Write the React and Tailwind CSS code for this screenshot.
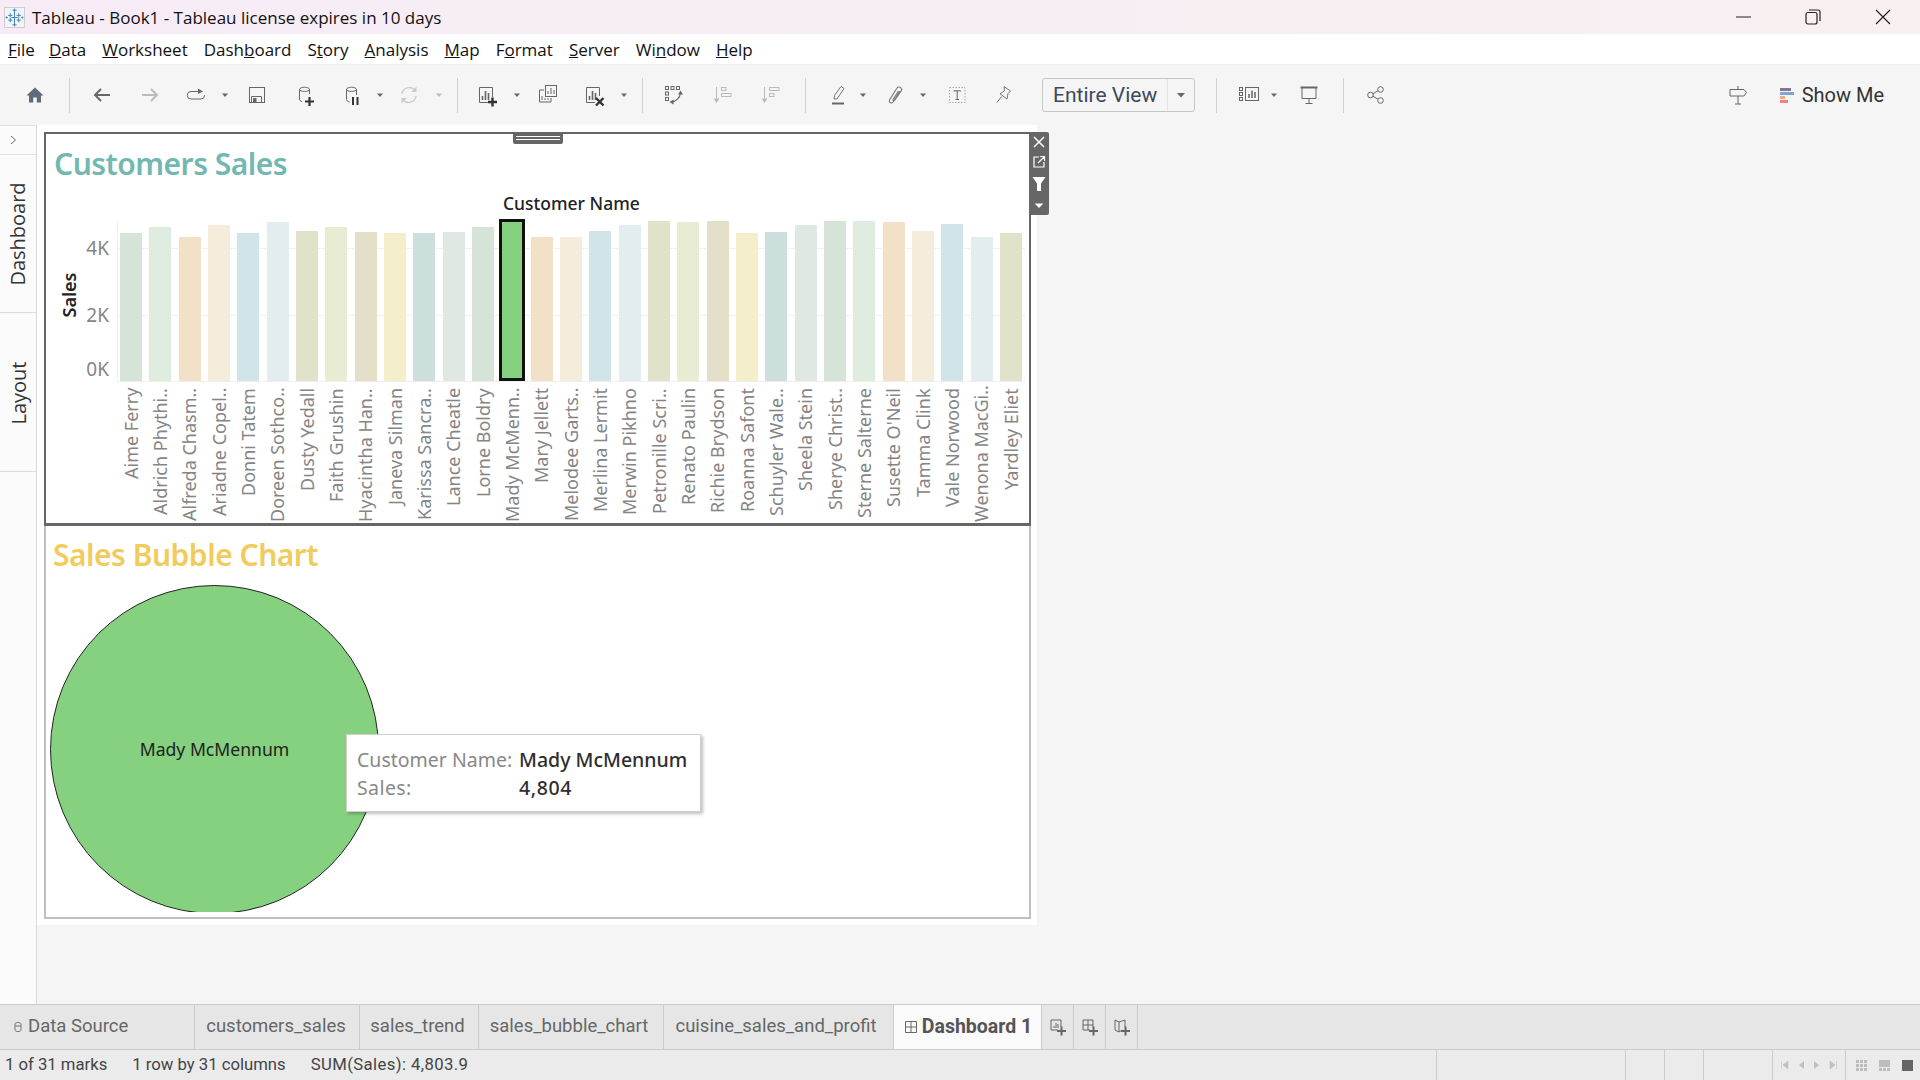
import React from "react";

const Ic = ({ children, className = "" }) => (
  <svg viewBox="0 0 24 24" fill="none" stroke="#666" strokeWidth="1" className={`w-[24px] h-[24px] shrink-0 ${className}`}>{children}</svg>
);
const Caret = ({ className = "", light }) => (
  <svg viewBox="0 0 10 10" className={`w-[10px] h-[10px] shrink-0 ${className}`}><path d="M2 3.5H8L5 7Z" fill={light ? "#bbb" : "#666"} /></svg>
);
const Div = ({ className = "" }) => <div className={`w-px h-[35px] bg-[#cfcfcf] shrink-0 ${className}`} />;

const bars = [
  ["Aime Ferry", 148, "#d5e4d7"], ["Aldrich Phythi..", 154, "#deecdf"], ["Alfreda Chasm..", 144, "#f3e0c9"], ["Ariadne Copel..", 156, "#f5ecdc"],
  ["Donni Tatem", 148, "#d1e4e7"], ["Doreen Sothco..", 159, "#e1edee"], ["Dusty Yedall", 150, "#e0e2ca"], ["Faith Grushin", 154, "#e8ecd3"],
  ["Hyacintha Han..", 149, "#e4dfc8"], ["Janeva Silman", 148, "#f4eeca"], ["Karissa Sancra..", 148, "#cddfdd"], ["Lance Cheatle", 149, "#dfe8e3"],
  ["Lorne Boldry", 154, "#d5e4d7"], ["Mady McMenn..", 162, "#86d17f"], ["Mary Jellett", 144, "#f3e0c9"], ["Melodee Garts..", 144, "#f5ecdc"],
  ["Merlina Lermit", 150, "#d1e4e7"], ["Merwin Pikhno", 156, "#e1edee"], ["Petronille Scri..", 160, "#e0e2ca"], ["Renato Paulin", 159, "#e8ecd3"],
  ["Richie Brydson", 160, "#e4dfc8"], ["Roanna Safont", 148, "#f4eeca"], ["Schuyler Wale..", 149, "#cddfdd"], ["Sheela Stein", 156, "#dfe8e3"],
  ["Sherye Christ..", 160, "#d5e4d7"], ["Sterne Salterne", 160, "#deecdf"], ["Susette O'Neil", 159, "#f3e0c9"], ["Tamma Clink", 150, "#f5ecdc"],
  ["Vale Norwood", 157, "#d1e4e7"], ["Wenona MacGi..", 144, "#e1edee"], ["Yardley Eliet", 148, "#e0e2ca"],
];

const menus = [
  ["", "D", "ata"], ["", "W", "orksheet"], ["Dash", "b", "oard"], ["S", "t", "ory"], ["", "A", "nalysis"],
  ["", "M", "ap"], ["F", "o", "rmat"], ["", "S", "erver"], ["Wi", "n", "dow"], ["", "H", "elp"],
];

function Toolbar() {
  return (
    <div className="h-[61px] bg-[#f5f5f5] flex items-center shrink-0 border-t border-[#efefef] [font-family:'Roboto',sans-serif]">
      <Ic className="ml-[23px]"><path d="M12 4.5L3.5 12.5H6V19.5H10.2V14.5H13.8V19.5H18V12.5H20.5Z" fill="#5f6b7b" stroke="none" /></Ic>
      <Div className="ml-[22px]" />
      <Ic className="ml-[20px]"><path d="M20 12H5M11 6L5 12L11 18" strokeWidth="1.9" /></Ic>
      <Ic className="ml-[24px]"><path d="M4 12H19M13 6L19 12L13 18" stroke="#bbb" strokeWidth="1.9" /></Ic>
      <Ic className="ml-[22px]"><path d="M15 8.5H7a3.5 3.5 0 0 0 0 7.500H17a3.500 3.500 0 0 0 3.500-3.500V12" /><path d="M14 5.500L19 8.500L14 11Z" fill="#666" stroke="none" /></Ic>
      <Caret className="ml-[12px]" />
      <Ic className="ml-[15px]"><rect x="4.500" y="4.500" width="15" height="15" /><path d="M6.500 19.500V13.500H16.500V19.500" /><rect x="8" y="15" width="3.500" height="4" fill="#666" stroke="none" /></Ic>
      <Ic className="ml-[24px]"><path d="M6.500 6.500C6.500 3.500 16.500 3.500 16.500 6.500V11M6.500 6.500C6.500 9 16.500 9 16.500 6.500M6.500 6.500V16.500C6.500 17.500 7.500 18 9 18.500" /><path d="M12 18.500H21M16.500 14V23" stroke="#333" strokeWidth="2.200" /></Ic>
      <Ic className="ml-[23px]"><path d="M6.500 6.500C6.500 3.500 16.500 3.500 16.500 6.500V12M6.500 6.500C6.500 9 16.500 9 16.500 6.500M6.500 6.500V16.500C6.500 17.500 7.500 18.500 9.500 19" /><path d="M13 14V22M17.500 14V22" stroke="#333" strokeWidth="2" /></Ic>
      <Caret className="ml-[11px]" />
      <Ic className="ml-[12px]"><path d="M5 11A7.500 7.500 0 0 1 18 7M19 13A7.500 7.500 0 0 1 6 17" stroke="#ccc" strokeWidth="1.500" /><path d="M19.500 3.500V9H14ZM4.500 20.500V15H10Z" fill="#ccc" stroke="none" /></Ic>
      <Caret className="ml-[13px]" light />
      <Div className="ml-[13px]" />
      <Ic className="ml-[18px]"><path d="M16.500 14V4.500H3.500V19.500H13" /><path d="M6.500 17V13M9.500 17V8M12.500 17V10" strokeWidth="1.600" /><path d="M12 19H21M16.500 14.500V23.500" stroke="#333" strokeWidth="2.400" /></Ic>
      <Caret className="ml-[12px]" />
      <Ic className="ml-[14px]"><path d="M8 7H3.500V19H15V15" /><rect x="9.500" y="2.500" width="11" height="11" fill="#f5f5f5" /><path d="M12 11V8M15 11V5M18 11V7M6 17V13M9 17V15M12 17V15" strokeWidth="1" /></Ic>
      <Ic className="ml-[23px]"><path d="M16.500 13V4.500H3.500V19.500H12" /><path d="M6.500 17V13M9.500 17V8M12.500 17V10" strokeWidth="1.600" /><path d="M13 15L20.500 22.500M20.500 15L13 22.500" stroke="#333" strokeWidth="2.400" /></Ic>
      <Caret className="ml-[12px]" />
      <Div className="ml-[13px]" />
      <Ic className="ml-[19px]"><g fill="none" strokeWidth="1"><rect x="3.500" y="3.500" width="3" height="3" /><rect x="9" y="3.500" width="3" height="3" /><rect x="14.500" y="3.500" width="3" height="3" /><rect x="3.500" y="9" width="3" height="3" /><rect x="3.500" y="14.500" width="3" height="3" /></g><path d="M18.500 10C18 15 14 18.500 9.500 19" strokeWidth="1.200" /><path d="M18.500 7.500L21 11.500H16ZM7.500 19L11.500 16.500V21.500Z" fill="#666" stroke="none" /></Ic>
      <Ic className="ml-[25px]"><g stroke="#bbb"><path d="M5.500 4V18" /><path d="M2.500 15.500H8.500L5.500 20Z" fill="#bbb" stroke="none" /><rect x="10.500" y="4.500" width="4.500" height="3" /><rect x="10.500" y="10.500" width="9.500" height="3" /></g></Ic>
      <Ic className="ml-[24px]"><g stroke="#bbb"><path d="M5.500 4V18" /><path d="M2.500 15.500H8.500L5.500 20Z" fill="#bbb" stroke="none" /><rect x="10.500" y="4.500" width="9.500" height="3" /><rect x="10.500" y="10.500" width="4.500" height="3" /></g></Ic>
      <Div className="ml-[22px]" />
      <Ic className="ml-[20px]"><path d="M15 3.500L18 5.500L11 16H8L8.500 12.500Z" stroke="#777" /><path d="M6 20.500H18" stroke="#666" strokeWidth="2" /></Ic>
      <Caret className="ml-[8px]" />
      <Ic className="ml-[15px]"><path d="M17 8L10 19C8.500 21 5.500 19.500 6.500 17L14 5C15.500 3 19.500 4.500 18.500 7.500L11.500 17.500C11 18 9.500 17.500 10 16.500L15.500 8" stroke="#777" strokeWidth="1.100" /></Ic>
      <Caret className="ml-[11px]" />
      <Ic className="ml-[17px]"><rect x="4.500" y="4.500" width="15.500" height="15" stroke="#aaa" strokeDasharray="1.500 1.500" /><path d="M9 8.500V7.800H15.500V8.500M12.200 8V16.500M10.500 16.500H14" stroke="#666" /></Ic>
      <Ic className="ml-[22px]"><path d="M13 3.500L19.500 8L17 10.500L16 16L9 10.800L13.500 7.800ZM10.500 13.500L6 19.500" stroke="#777" /></Ic>
      <div className="ml-[27px] w-[153px] h-[34px] flex items-stretch border border-[#c6c6c6] rounded-[3px] shrink-0">
        <div className="flex-1 pl-[10px] pt-[1px] flex items-center text-[21px] text-[#3a4a5c] border-r border-[#e3e3e3] whitespace-nowrap">Entire View</div>
        <div className="w-[26px] flex items-center justify-center"><svg viewBox="0 0 10 10" className="w-[10px] h-[10px]"><path d="M1 3H9L5 7.500Z" fill="#666" /></svg></div>
      </div>
      <Div className="ml-[21px]" />
      <Ic className="ml-[20px]"><rect x="8.500" y="4.500" width="13" height="13" /><path d="M12 15V11M15 15V7.500M18 15V9" strokeWidth="1.500" /><rect x="2.500" y="4.500" width="3" height="3" /><rect x="2.500" y="9.500" width="3" height="3" /><rect x="2.500" y="14.500" width="3" height="3" /></Ic>
      <Caret className="ml-[8px]" />
      <Ic className="ml-[18px]"><path d="M3.500 4.500H20.500" strokeWidth="2" /><path d="M5 5V15.500H19V5M12 15.500V20.500M8.500 20.500H15.500" /></Ic>
      <Div className="ml-[22px]" />
      <Ic className="ml-[20px]"><circle cx="6.500" cy="12" r="2.800" /><circle cx="16.500" cy="6.500" r="2.800" /><circle cx="16.500" cy="17.500" r="2.800" /><path d="M9 10.700L14 7.800M9 13.300L14 16.200" /></Ic>
      <Ic className="ml-auto"><path d="M4 6.500H18L20.500 9.500L18 13H4ZM12 3V6.500M12 13V21M9 21H15" /></Ic>
      <div className="ml-[30px] w-[14px] flex flex-col gap-px shrink-0">
        <div className="h-[3px] w-[11px] bg-[#8b7396]" />
        <div className="h-[3px] w-[14px] bg-[#7fa6cf]" />
        <div className="h-[3px] w-[5px] bg-[#f5a97f]" />
        <div className="h-[3px] w-[8px] bg-[#f57c85]" />
      </div>
      <div className="ml-[8px] mr-[36px] -mt-[1px] text-[20px] text-[#333]">Show Me</div>
    </div>
  );
}

function Zone1() {
  return (
    <div className="relative w-[987px] h-[394px] border-2 border-b-[3px] border-[#666] bg-white shrink-0 [font-family:'Noto_Sans',sans-serif]">
      <div className="absolute left-[467px] -top-[2px] w-[50px] h-[12px] bg-[#666] rounded-b-[2px] flex flex-col justify-center gap-[2px] px-[3px]">
        <div className="h-px bg-white" /><div className="h-px bg-white" />
      </div>
      <div className="absolute left-full -top-[2px] w-[20px] h-[83px] bg-[#666] rounded-r-[2px] flex flex-col items-center">
        <svg viewBox="0 0 20 20" className="w-[20px] h-[20px]" fill="none" stroke="#fff" strokeWidth="1.500"><path d="M5 5L15 15M15 5L5 15" /></svg>
        <svg viewBox="0 0 20 20" className="w-[20px] h-[20px]" fill="none" stroke="#fff" strokeWidth="1.200"><path d="M10 5H5V15H15V10M9 11L15 5M11 4.500H15.500V9" /></svg>
        <svg viewBox="0 0 20 20" className="w-[20px] h-[24px]"><path d="M3.500 3H16.500L12 9.500V17H8V9.500Z" fill="#fff" /></svg>
        <svg viewBox="0 0 20 20" className="w-[20px] h-[19px]"><path d="M5.500 8H14.500L10 12.500Z" fill="#fff" /></svg>
      </div>

      <div className="pl-[8px] pt-[12px] h-[44px] text-[30px] leading-[36px] font-semibold text-[#73b8b0] tracking-[-0.5px] whitespace-nowrap">Customers Sales</div>
      <div className="mt-[15px] ml-[457px] h-[20px] text-[17.5px] leading-[20px] font-medium text-[#222] whitespace-nowrap">Customer Name</div>

      <div className="relative mt-[7px] ml-[71px] h-[172px] w-[908px]">
        <div className="absolute left-0 right-0 top-[28px] h-px bg-[#f1f1f1]" />
        <div className="absolute left-0 right-0 top-[95px] h-px bg-[#f1f1f1]" />
        <div className="absolute left-0 top-0 bottom-[11px] w-px bg-[#f1f1f1]" />
        <div className="absolute -left-[36px] top-[17px] w-[28px] text-right text-[19px] leading-[22px] text-[#858585]">4K</div>
        <div className="absolute -left-[36px] top-[84px] w-[28px] text-right text-[19px] leading-[22px] text-[#858585]">2K</div>
        <div className="absolute -left-[36px] top-[138px] w-[28px] text-right text-[19px] leading-[22px] text-[#858585]">0K</div>
        <div className="absolute -left-[73px] top-[63px] w-[50px] h-[24px] -rotate-90 text-[18px] leading-[24px] font-semibold text-[#222] text-center">Sales</div>
        <div className="absolute left-0 right-0 top-[161px] h-px bg-[#efefef]" />
        <div className="absolute left-[3px] bottom-[11px] flex items-end gap-[7.33px]">
          {bars.map((b) => (
            b[0].startsWith("Mady") ? (
              <div key={b[0]} className="w-[26px] -mx-[2px] h-[162px] bg-[#86d17f] border-[3px] border-[#111] shrink-0" />
            ) : (
              <div key={b[0]} className="w-[22px] shrink-0" style={{ height: b[1], backgroundColor: b[2] }} />
            )
          ))}
        </div>
      </div>
      <div className="ml-[70px] flex w-[940px] h-[132px] -mt-[4px]">
        {bars.map((b) => (
          <div key={b[0]} className="w-[29.33px] shrink-0 h-[134px] flex justify-center">
            <div className="[writing-mode:vertical-rl] rotate-180 h-[134px] text-right whitespace-nowrap text-[18px] leading-[22px] text-[#858585]">{b[0]}</div>
          </div>
        ))}
      </div>
    </div>
  );
}

function Zone2() {
  return (
    <div className="relative w-[987px] h-[393px] border-2 border-t-0 border-[#c0c0c0] bg-white shrink-0 [font-family:'Noto_Sans',sans-serif]">
      <div className="pl-[7px] pt-[11px] h-[59px] text-[30px] leading-[36px] font-semibold text-[#f2cb5e] tracking-[-0.5px] whitespace-nowrap">Sales Bubble Chart</div>
      <div className="ml-[4px] h-[327px] w-[340px] overflow-hidden">
        <div className="w-[329px] h-[329px] rounded-full bg-[#86d17f] border border-[#222] flex items-center justify-center text-[17.6px] text-[#222]">Mady McMennum</div>
      </div>
      <div className="absolute left-[300px] top-[208px] w-[355px] h-[78px] bg-white border border-[#cfcfcf] shadow-[2px_2px_3px_rgba(0,0,0,0.25)] pl-[10px] pt-[11px] grid grid-cols-[162px_1fr] content-start text-[19.5px] leading-[28px] whitespace-nowrap">
        <div className="text-[#888]">Customer Name:</div>
        <div className="text-[#2e2e2e] font-medium">Mady McMennum</div>
        <div className="text-[#888] tracking-[0.4px]">Sales:</div>
        <div className="text-[#2e2e2e] font-medium tracking-[0.6px]">4,804</div>
      </div>
    </div>
  );
}

const Tab = ({ className = "", children }) => (
  <div className={`h-full flex items-center justify-center border-r border-[#cbcbcb] text-[18.5px] text-[#666] shrink-0 whitespace-nowrap ${className}`}>{children}</div>
);

export default function App() {
  return (
    <div className="w-[1920px] h-[1080px] overflow-hidden flex flex-col bg-white [font-family:'Open_Sans',sans-serif]">
      <div className="h-[34px] shrink-0 flex items-center bg-linear-to-r from-[#f7ecf6] to-[#f8f0f1] text-[17px] text-[#111]">
        <svg viewBox="0 0 20 20" className="ml-[4px] w-[21px] h-[21px] shrink-0" fill="none" stroke="#3d7fb5" strokeWidth="0.900">
          <rect x="0.500" y="0.500" width="19" height="19" fill="#f2f5f7" stroke="#ccc" />
          <path d="M10 3V17M7 10H13M10 1.500V5M8 3H12M10 15V18.500M8 17H12M6 6V10M4 8H8M14 6V10M12 8H16M6 10.500V14.500M4 12.500H8M14 10.500V14.500M12 12.500H16M2.500 9V11M1.500 10H3.500M17.500 9V11M16.500 10H18.500" />
        </svg>
        <div className="ml-[7px] pt-[1px] whitespace-nowrap">Tableau - Book1 - Tableau license expires in 10 days</div>
        <svg viewBox="0 0 16 16" className="ml-auto w-[16px] h-[16px]" fill="none" stroke="#222"><path d="M0 8H15" /></svg>
        <svg viewBox="0 0 16 16" className="ml-[53px] w-[16px] h-[16px]" fill="none" stroke="#222" strokeWidth="1.200"><rect x="1" y="3.500" width="11" height="11.500" rx="2" /><path d="M4 1H13C14.500 1 15 2 15 3V12" /></svg>
        <svg viewBox="0 0 16 16" className="ml-[54px] mr-[29px] w-[16px] h-[16px]" fill="none" stroke="#222" strokeWidth="1.200"><path d="M1 1L15 15M15 1L1 15" /></svg>
      </div>
      <div className="h-[30px] shrink-0 bg-white flex items-center gap-[16px] pl-[8px] pt-[2px] text-[17px] text-[#111]">
        <div className="whitespace-nowrap -mr-[2px]"><span className="underline">F</span>ile</div>
        {menus.map((m) => (
          <div key={m[0] + m[1] + m[2]} className="whitespace-nowrap">{m[0]}<span className="underline">{m[1]}</span>{m[2]}</div>
        ))}
      </div>
      <Toolbar />
      <div className="flex-1 min-h-0 flex">
        <div className="w-[37px] shrink-0 bg-[#fbfbfb] border-r border-[#d9d9d9] flex flex-col">
          <div className="h-[30px] border-b border-t border-[#e0e0e0] flex items-center pl-[8px] pb-[1px]">
            <svg viewBox="0 0 10 10" className="w-[10px] h-[10px]" fill="none" stroke="#666"><path d="M3 1L7.500 5L3 9" /></svg>
          </div>
          <div className="h-[158px] border-b border-[#dcdcdc] flex items-center justify-center">
            <div className="-rotate-90 text-[20px] text-[#333] whitespace-nowrap">Dashboard</div>
          </div>
          <div className="h-[159px] border-b border-[#dcdcdc] flex items-center justify-center pt-[2px]">
            <div className="-rotate-90 text-[20px] text-[#333] whitespace-nowrap">Layout</div>
          </div>
        </div>
        <div className="flex-1 bg-[#f5f5f5]">
          <div className="w-[1000px] h-[800px] bg-white pl-[7px] pt-[7px] flex flex-col">
            <Zone1 />
            <Zone2 />
          </div>
        </div>
      </div>
      <div className="h-[46px] shrink-0 bg-[#e6e6e6] border-y border-[#cbcbcb] flex [font-family:'Roboto',sans-serif]">
        <Tab className="w-[195px] !justify-start pl-[13px] gap-[5px]">
          <svg viewBox="0 0 10 12" className="w-[10px] h-[12px]" fill="none" stroke="#777"><path d="M2 3C2 1 8 1 8 3V9C8 11 2 11 2 9ZM2 5H8" /></svg>
          Data Source
        </Tab>
        <Tab className="w-[165px] pr-[2px]">customers_sales</Tab>
        <Tab className="w-[119px] pr-[3px]">sales_trend</Tab>
        <Tab className="w-[185px] pr-[4px]">sales_bubble_chart</Tab>
        <Tab className="w-[230px] pr-[5px]">cuisine_sales_and_profit</Tab>
        <Tab className="w-[148px] bg-[#fafafa] gap-[5px] !text-[#555] !text-[19.5px] font-bold pl-[2px]">
          <svg viewBox="0 0 12 12" className="w-[12px] h-[12px]" fill="none" stroke="#666"><path d="M0.500 0.500H11.500V11.500H0.500ZM0.500 6H11.500M6 0.500V11.500" /></svg>
          Dashboard 1
        </Tab>
        <Tab className="w-[32px]"><Ic><path d="M15 12V5H5V15H12" /><path d="M8 13V11M10 13V8M12 13V9" /><path d="M11 16H20M15.500 11.500V20.500" strokeWidth="2" /></Ic></Tab>
        <Tab className="w-[32px]"><Ic><path d="M12 15H5V5H15V12M5 10H15M10 5V15" /><path d="M11 16H20M15.500 11.500V20.500" strokeWidth="2" /></Ic></Tab>
        <Tab className="w-[32px]"><Ic><path d="M12 15L9 17V7L5 5V15L9 17M9 7L15 5V12" /><path d="M11 16H20M15.500 11.500V20.500" strokeWidth="2" /></Ic></Tab>
      </div>
      <div className="h-[30px] shrink-0 bg-[#ebebeb] flex text-[16.7px] text-[#444] [font-family:'Roboto',sans-serif]">
        <div className="w-[1436px] flex items-center pl-[5px] whitespace-nowrap">
          <span>1 of 31 marks</span><span className="ml-[25px]">1 row by 31 columns</span><span className="ml-[25px] tracking-[0.4px]">SUM(Sales): 4,803.9</span>
        </div>
        <div className="w-[189px] border-l border-[#cbcbcb]" />
        <div className="w-[39px] border-l border-[#cbcbcb]" />
        <div className="w-[39px] border-l border-[#cbcbcb]" />
        <div className="w-[69px] border-l border-[#cbcbcb]" />
        <div className="w-[73px] border-l border-[#cbcbcb] flex items-center pl-[8px] gap-[8px]">
          <svg viewBox="0 0 8 8" className="w-[8px] h-[8px]"><path d="M0.500 0V8M7 0V8L2 4Z" fill="#c0c0c0" stroke="#c0c0c0" strokeWidth="0.600" /></svg>
          <svg viewBox="0 0 8 8" className="w-[8px] h-[8px]"><path d="M7 0V8L2 4Z" fill="#c0c0c0" /></svg>
          <svg viewBox="0 0 8 8" className="w-[8px] h-[8px]"><path d="M1 0V8L6 4Z" fill="#c0c0c0" /></svg>
          <svg viewBox="0 0 8 8" className="w-[8px] h-[8px]"><path d="M7.500 0V8M1 0V8L6 4Z" fill="#c0c0c0" stroke="#c0c0c0" strokeWidth="0.600" /></svg>
        </div>
        <div className="w-[75px] border-l border-[#cbcbcb] flex items-center pl-[10px] gap-[12px]">
          <div className="grid grid-cols-3 gap-px w-[11px] h-[11px]">
            {Array.from({ length: 9 }).map((_, i) => <div key={i} className="bg-[#bdbdbd]" />)}
          </div>
          <div className="w-[11px] h-[11px] flex flex-col gap-px">
            <div className="h-[7px] bg-[#bdbdbd]" />
            <div className="h-[3px] grid grid-cols-3 gap-px"><div className="bg-[#bdbdbd]" /><div className="bg-[#bdbdbd]" /><div className="bg-[#bdbdbd]" /></div>
          </div>
          <div className="w-[11px] h-[11px] bg-[#666]" />
        </div>
      </div>
    </div>
  );
}
